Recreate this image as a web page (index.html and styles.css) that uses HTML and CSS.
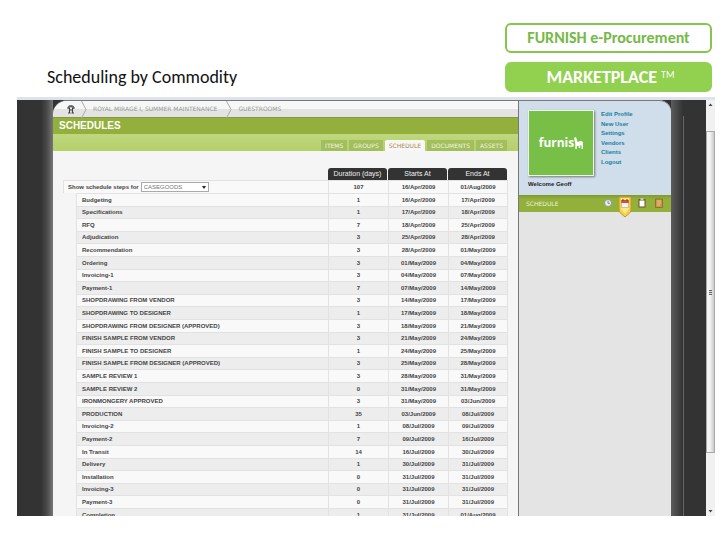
FILE: index.html
```html
<!DOCTYPE html>
<html lang="en">
<head>
<meta charset="utf-8">
<title>Scheduling by Commodity</title>
<link rel="stylesheet" href="styles.css">
</head>
<body>
<header class="top">
  <h1>Scheduling by Commodity</h1>
  <div class="badges">
    <div class="badge outline">FURNISH e-Procurement</div>
    <div class="badge solid">MARKETPLACE <span class="tm">TM</span></div>
  </div>
</header>
<div class="frame">
  <div class="edge-left"></div>
  <main>
    <nav class="crumbs" aria-label="Breadcrumb">
      <a class="home" href="#" aria-label="Home"><svg width="10" height="10" viewBox="0 0 10 10"><path d="M1 4.500C1.500 2 3.500 1 5 1s3.500 1 4 3.500L7.500 5 5 3 2.500 5z" fill="#666"/><path d="M3.500 4v4.500M6.500 4v4.500M2 9h2.500M5.500 9H8M3.500 6h3" fill="none" stroke="#444" stroke-width="1.1"/></svg></a>
      <svg class="chev" viewBox="0 0 6 17"><path d="M.5 0 5 8.500.5 17" fill="none" stroke="#aaa"/></svg>
      <a class="crumb" href="#">ROYAL MIRAGE I, SUMMER MAINTENANCE</a>
      <svg class="chev" viewBox="0 0 6 17"><path d="M.5 0 5 8.500.5 17" fill="none" stroke="#aaa"/></svg>
      <a class="crumb" href="#">GUESTROOMS</a>
    </nav>
    <h2>SCHEDULES</h2>
    <nav class="tabs" aria-label="Sections">
      <a href="#">ITEMS</a><a href="#">GROUPS</a><a class="active" href="#">SCHEDULE</a><a href="#">DOCUMENTS</a><a href="#">ASSETS</a>
    </nav>
    <div class="content">
      <table>
        <colgroup><col class="c-indent"><col><col class="c-num"><col class="c-num"><col class="c-num"></colgroup>
        <thead><tr><td colspan="2"></td><th><span>Duration (days)</span></th><th><span>Starts At</span></th><th><span>Ends At</span></th></tr></thead>
        <tbody class="summary"><tr><td colspan="2" class="pick"><div class="field"><label for="steps">Show schedule steps for</label><span class="select"><select id="steps"><option>CASEGOODS</option></select></span></div></td><td>107</td><td>16/Apr/2009</td><td>01/Aug/2009</td></tr></tbody>
        <tbody class="steps">
          <tr><td></td><td>Budgeting</td><td>1</td><td>16/Apr/2009</td><td>17/Apr/2009</td></tr>
          <tr><td></td><td>Specifications</td><td>1</td><td>17/Apr/2009</td><td>18/Apr/2009</td></tr>
          <tr><td></td><td>RFQ</td><td>7</td><td>18/Apr/2009</td><td>25/Apr/2009</td></tr>
          <tr><td></td><td>Adjudication</td><td>3</td><td>25/Apr/2009</td><td>28/Apr/2009</td></tr>
          <tr><td></td><td>Recommendation</td><td>3</td><td>28/Apr/2009</td><td>01/May/2009</td></tr>
          <tr><td></td><td>Ordering</td><td>3</td><td>01/May/2009</td><td>04/May/2009</td></tr>
          <tr><td></td><td>Invoicing-1</td><td>3</td><td>04/May/2009</td><td>07/May/2009</td></tr>
          <tr><td></td><td>Payment-1</td><td>7</td><td>07/May/2009</td><td>14/May/2009</td></tr>
          <tr><td></td><td>SHOPDRAWING FROM VENDOR</td><td>3</td><td>14/May/2009</td><td>17/May/2009</td></tr>
          <tr><td></td><td>SHOPDRAWING TO DESIGNER</td><td>1</td><td>17/May/2009</td><td>18/May/2009</td></tr>
          <tr><td></td><td>SHOPDRAWING FROM DESIGNER (APPROVED)</td><td>3</td><td>18/May/2009</td><td>21/May/2009</td></tr>
          <tr><td></td><td>FINISH SAMPLE FROM VENDOR</td><td>3</td><td>21/May/2009</td><td>24/May/2009</td></tr>
          <tr><td></td><td>FINISH SAMPLE TO DESIGNER</td><td>1</td><td>24/May/2009</td><td>25/May/2009</td></tr>
          <tr><td></td><td>FINISH SAMPLE FROM DESIGNER (APPROVED)</td><td>3</td><td>25/May/2009</td><td>28/May/2009</td></tr>
          <tr><td></td><td>SAMPLE REVIEW 1</td><td>3</td><td>28/May/2009</td><td>31/May/2009</td></tr>
          <tr><td></td><td>SAMPLE REVIEW 2</td><td>0</td><td>31/May/2009</td><td>31/May/2009</td></tr>
          <tr><td></td><td>IRONMONGERY APPROVED</td><td>3</td><td>31/May/2009</td><td>03/Jun/2009</td></tr>
          <tr><td></td><td>PRODUCTION</td><td>35</td><td>03/Jun/2009</td><td>08/Jul/2009</td></tr>
          <tr><td></td><td>Invoicing-2</td><td>1</td><td>08/Jul/2009</td><td>09/Jul/2009</td></tr>
          <tr><td></td><td>Payment-2</td><td>7</td><td>09/Jul/2009</td><td>16/Jul/2009</td></tr>
          <tr><td></td><td>In Transit</td><td>14</td><td>16/Jul/2009</td><td>30/Jul/2009</td></tr>
          <tr><td></td><td>Delivery</td><td>1</td><td>30/Jul/2009</td><td>31/Jul/2009</td></tr>
          <tr><td></td><td>Installation</td><td>0</td><td>31/Jul/2009</td><td>31/Jul/2009</td></tr>
          <tr><td></td><td>Invoicing-3</td><td>0</td><td>31/Jul/2009</td><td>31/Jul/2009</td></tr>
          <tr><td></td><td>Payment-3</td><td>0</td><td>31/Jul/2009</td><td>31/Jul/2009</td></tr>
          <tr><td></td><td>Completion</td><td>1</td><td>31/Jul/2009</td><td>01/Aug/2009</td></tr>
        </tbody>
      </table>
    </div>
  </main>
  <aside>
    <section class="profile">
      <div class="account">
        <div class="logo"><span>furnis</span><svg width="9" height="13" viewBox="0 0 9 13"><path d="M0 1 2 0l1.600 5L7.400 3.800 9 5.500v6.500H7.500V8L6.200 8.500V11H4.700V8.700L2.800 9v3H1.300V7z" fill="#fff"/></svg></div>
        <nav class="links" aria-label="Account">
          <a href="#">Edit Profile</a><a href="#">New User</a><a href="#">Settings</a><a href="#">Vendors</a><a href="#">Clients</a><a href="#">Logout</a>
        </nav>
      </div>
      <p>Welcome Geoff</p>
    </section>
    <div class="tools">
      <h3>SCHEDULE</h3>
      <div class="icons">
        <button aria-label="Clock"><svg width="14" height="14" viewBox="0 0 14 14"><circle cx="7" cy="7" r="3.500" fill="#e9eef0" stroke="#8d9a8d"/><path d="M7 4.800V7.300H8.800" fill="none" stroke="#667" stroke-width=".8"/></svg></button>
        <button class="current" aria-label="Calendar"><svg width="14" height="22" viewBox="0 0 14 22"><path d="M1 1h12v13c0 3-3 4-6 7-3-3-6-4-6-7z" fill="#f5cf45" stroke="#b99a2c"/><path d="M3 2h8v11l-4 5-4-5z" fill="#ffe88b"/><path d="M3.500 4.500h7v7h-7z" fill="#f7f3ee" stroke="#b0a090" stroke-width=".6"/><path d="M3.200 4h7.600v3H3.200z" fill="#d5503c"/><path d="M5 3v2M9 3v2" stroke="#833"/></svg></button>
        <button aria-label="Clipboard"><svg width="14" height="14" viewBox="0 0 14 14"><path d="M3.500 3h7v8.500h-7z" fill="#6d5426"/><path d="M4.500 4.500h5v6h-5z" fill="#fff"/><path d="M5.500 2.200h3v2h-3z" fill="#ccc"/></svg></button>
        <button aria-label="Notebook"><svg width="14" height="14" viewBox="0 0 14 14"><path d="M3.500 3h7v8.500h-7z" fill="#c9974c" stroke="#8b6427" stroke-width=".8"/><path d="M5 5h4M5 7h4M5 9h3" stroke="#ecd09a" stroke-width=".8"/></svg></button>
      </div>
    </div>
  </aside>
  <div class="edge-right"></div>
  <div class="scroll">
    <svg viewBox="0 0 9 5" class="arrow"><path d="M2.500 4 4.500 1.500 6.500 4z" fill="#444"/></svg>
    <div class="track"><div class="thumb"><i></i></div></div>
    <svg viewBox="0 0 9 5" class="arrow"><path d="M2.500 1 4.500 3.500 6.500 1z" fill="#444"/></svg>
  </div>
</div>
</body>
</html>
```
FILE: styles.css
```css
* { box-sizing: border-box; }
body {
  margin: 0;
  height: 100vh;
  padding: 23px 13px 30px 17px;
  display: flex;
  flex-direction: column;
  background: #fff;
  color: #444;
  font: 6px/9px "Liberation Sans", sans-serif;
}
a { color: inherit; text-decoration: none; }
h1, h2, h3, p { margin: 0; }
button { border: 0; padding: 0; background: none; display: block; }
svg { display: block; }

.top {
  display: flex;
  justify-content: space-between;
  align-items: flex-end;
  padding: 0 3px 5px 30px;
  font-family: Carlito, Lato, sans-serif;
}
h1 { font-size: 18px; line-height: 30px; font-weight: 400; color: #111; }
.badges { display: grid; gap: 9px; width: 207px; }
.badge {
  height: 30px;
  border: 2px solid #92d050;
  border-radius: 6px;
  text-align: center;
  font-size: 16px;
  line-height: 26px;
  font-weight: 700;
}
.outline { color: #76b947; border-color: #86c64f; }
.solid { background: #92d050; color: #fff; font-size: 18px; padding-left: 4px; }
.tm { font-size: 10px; font-weight: 400; line-height: 10px; vertical-align: 5px; }

.frame {
  flex: 1;
  min-height: 0;
  display: flex;
  overflow: hidden;
  background: #333;
  border-top: 3px solid #dfe2ec;
}
.edge-left { width: 36px; background: linear-gradient(90deg, #333 24px, #4a4a4a 30px, #777 36px); }
main { flex: 1; min-width: 0; background: #f5f5f5; border-top-left-radius: 14px; border-top: 1px solid #777; }
.crumbs {
  height: 16px;
  display: flex;
  align-items: center;
  padding-left: 13px;
  gap: 5px;
  background: linear-gradient(#f7f7f7 50%, #e3e3e3 50%);
  border-top-left-radius: 14px;
  color: #999;
  font: 6px/16px "DejaVu Sans", sans-serif;
}
.crumb { padding: 0 4px 0 1px; }
.chev { width: 6px; height: 17px; }
h2 {
  height: 17px;
  padding-left: 6px;
  background: #93af3c;
  border-top: 1px solid #84993f;
  color: #fff;
  font: 700 10px/16px "Liberation Sans", sans-serif;
}
.tabs {
  height: 17px;
  display: flex;
  justify-content: flex-end;
  align-items: flex-end;
  gap: 2px;
  padding-right: 11px;
  background: linear-gradient(#c0d780, #b4d069);
  font: 6px/11px "DejaVu Sans", sans-serif;
}
.tabs a { padding: 0 4px; background: #a3be5d; color: #f1f6df; }
.tabs .active { background: #f7f7f5; color: #a98a52; border-radius: 2px 2px 0 0; }

.content { padding: 17px 10px 0; }
table { width: 100%; table-layout: fixed; border-collapse: separate; border-spacing: 0; }
.c-indent { width: 13px; }
.c-num { width: 60px; }
td, th { padding: 0; text-align: center; }
th { height: 12px; font: 7px/12px "Liberation Sans", sans-serif; color: #eee; }
th span { display: block; margin-right: 1px; background: #333; border-radius: 3px 3px 0 0; }
tbody td { border-left: 1px solid #e2e2e2; border-top: 1px solid #e2e2e2; background: #f9f9f9; font-weight: 700; }
tbody td:last-child { border-right: 1px solid #e2e2e2; }
.summary td { height: 13px; }
.summary .pick { padding-left: 4px; }
.field { display: flex; align-items: center; gap: 2px; }
.select { position: relative; }
.select::after {
  content: "";
  position: absolute;
  right: 3px;
  top: 4px;
  border: 2px solid transparent;
  border-top: 3px solid #222;
}
select {
  display: block;
  appearance: none;
  width: 68px;
  height: 10px;
  padding: 0 2px;
  border: 1px solid #aaa;
  border-radius: 0;
  background: #fff;
  color: #777;
  font: 6px/8px "Liberation Sans", sans-serif;
}
.steps td { height: 13px; }
.steps tr:nth-child(5n+2) td, .steps tr:nth-child(5n+4) td { height: 12px; }
.steps tr:nth-child(even) td { background: #ededed; }
.steps td:first-child, .steps tr:nth-child(even) td:first-child { background: none; border: 0; }
.steps td:nth-child(2) { text-align: left; padding-left: 5px; }

aside { width: 153px; background: #e4e4e4; border-left: 1px solid #777; border-top-right-radius: 12px; }
.profile {
  height: 95px;
  padding: 9px 9px 0;
  background: #d0deeb;
  border-top: 1px solid #777;
  border-top-right-radius: 12px;
}
.account { display: flex; gap: 7px; }
.logo {
  width: 66px;
  height: 66px;
  display: flex;
  align-items: center;
  justify-content: center;
  border: 1px solid #eef5ea;
  box-shadow: 1px 1px 2px #777;
  background: #78bf48;
  color: #fff;
  font: 700 12px/14px "Open Sans", sans-serif;
}
.links { display: flex; flex-direction: column; justify-content: space-between; height: 57px; color: #17809f; font-weight: 700; }
.profile p { padding-top: 4px; color: #222; font-weight: 700; }
.tools {
  height: 17px;
  display: flex;
  justify-content: space-between;
  padding: 0 5px 0 7px;
  background: linear-gradient(#80992f, #93af3c 4px, #93af3c);
}
h3 { font: 6px/17px "DejaVu Sans", sans-serif; color: #eef3dc; }
.icons { display: flex; align-items: flex-start; gap: 3px; padding-top: 1px; }

.edge-right {
  width: 35px;
  background: linear-gradient(#666, #666) 12px 16px / 1px 100% no-repeat, linear-gradient(90deg, #5c5c5c, #333 12px);
}
.scroll { width: 9px; display: flex; flex-direction: column; background: #f1f1f1; padding: 2px 0; }
.arrow { width: 9px; height: 5px; }
.track { flex: 1; padding: 24px 0 56px; }
.thumb {
  height: 100%;
  display: flex;
  align-items: center;
  justify-content: center;
  border: 1px solid #aaa;
  background: linear-gradient(90deg, #f5f5f5 40%, #cacaca);
}
.thumb i { width: 3px; height: 5px; background: repeating-linear-gradient(#666 0 1px, #ddd 1px 2px); }
```
